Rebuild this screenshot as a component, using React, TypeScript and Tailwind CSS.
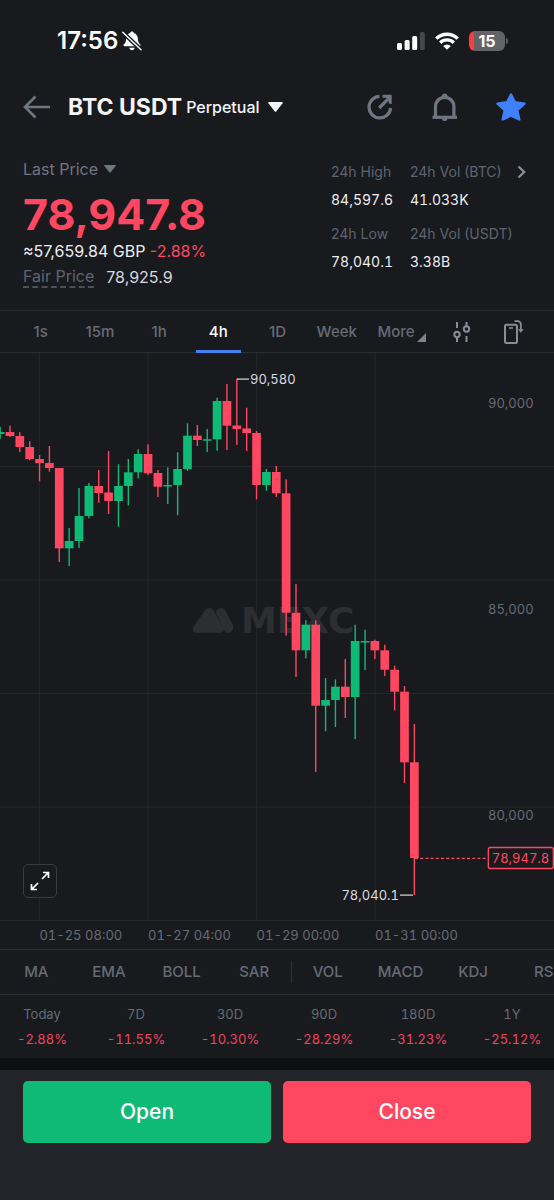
import type { ReactNode } from 'react'

// [high, body top, body bottom, low, rising] in chart units
type Candle = [number, number, number, number, boolean]

const candles: Candle[] = [
  [426.7, 432, 434, 438.7, true],
  [425.7, 432, 436, 437, false],
  [432.3, 436, 447, 452, false],
  [441.3, 447, 459, 460.3, false],
  [455, 459, 463, 481.3, false],
  [446, 463, 468, 471.7, false],
  [468, 468, 548.3, 562, false],
  [528, 541, 548.3, 566, true],
  [488, 516, 541, 548, true],
  [483, 486, 516, 518.3, true],
  [470, 486, 493, 502.7, false],
  [451, 492.5, 501, 514, false],
  [464.3, 486, 501, 526.7, true],
  [459, 472.3, 486, 505.3, true],
  [449.3, 454, 472.3, 478.3, true],
  [444.3, 454, 473.3, 475, false],
  [470, 473, 486.7, 497, false],
  [467.3, 485, 486.5, 504, true],
  [452.3, 469, 485, 515.3, true],
  [423.3, 435.7, 469, 471, true],
  [425, 435.7, 440, 446, false],
  [429, 439.3, 440.7, 452, true],
  [397.7, 401, 439.3, 450.7, true],
  [384, 401, 425.7, 450, false],
  [378.7, 425.5, 429, 445, false],
  [407.7, 428.5, 433, 451, false],
  [431, 433, 485, 499.3, false],
  [469, 472, 485, 490.7, true],
  [466, 472, 493.3, 497, false],
  [479.3, 493.3, 612.7, 635.7, false],
  [584, 612.7, 650.3, 677, false],
  [620.3, 624.7, 650.3, 658.3, true],
  [620.3, 624.7, 705.7, 772, false],
  [678, 700, 705.7, 731.3, true],
  [679.3, 686.7, 700, 727, true],
  [659, 686.7, 697, 718, false],
  [624.7, 641, 697, 739, true],
  [629.7, 641, 642.5, 670, true],
  [639.7, 641, 650.3, 659, false],
  [644.7, 650.3, 669.7, 676, false],
  [665.7, 669.7, 691.7, 710.3, false],
  [686, 691.7, 762.3, 783, false],
  [724, 762.3, 858, 895, false],
]

const CANDLE_STEP = 9.863
const CANDLE_WIDTH = 8.7

const intervals = ['1s', '15m', '1h', '4h', '1D', 'Week']
const overlays = ['MA', 'EMA', 'BOLL', 'SAR']
const oscillators = ['VOL', 'MACD', 'KDJ', 'RSI']

const dateMarks = [
  { x: 39.4, label: '01-25 08:00' },
  { x: 148, label: '01-27 04:00' },
  { x: 256.6, label: '01-29 00:00' },
  { x: 375, label: '01-31 00:00' },
]

const priceMarks = [
  { y: 403, label: '90,000' },
  { y: 609, label: '85,000' },
  { y: 815, label: '80,000' },
]

const returns = [
  { period: 'Today', change: '-2.88%' },
  { period: '7D', change: '-11.55%' },
  { period: '30D', change: '-10.30%' },
  { period: '90D', change: '-28.29%' },
  { period: '180D', change: '-31.23%' },
  { period: '1Y', change: '-25.12%' },
]

function StatusBar() {
  return (
    <div className="flex h-[82px] items-center justify-between pl-[57px] pr-[46px]">
      <div className="flex items-center gap-1">
        <span className="text-[24px] font-semibold leading-7 text-white">17:56</span>
        <svg width="20" height="20" viewBox="0 0 20 20" fill="#fff">
          <path d="M10 .5c.9 0 1.6.6 1.8 1.4 2.6.8 4 3 4.1 5.8.1 3.300.9 4.400 2.200 5.600.7.7.5 1.900-.5 1.900H2.400c-1 0-1.200-1.200-.5-1.900C3.200 12.100 4 11 4.100 7.700c.1-2.800 1.500-5 4.100-5.800C8.400 1.100 9.100.5 10 .5Z" />
          <path d="M7.300 16.800h5.400c-.2 1.400-1.300 2.400-2.700 2.400s-2.500-1-2.700-2.400Z" />
          <path d="M.6 1.200 19 18.800" stroke="#191a1e" strokeWidth="4.200" />
          <path d="M.8 1.200 19 18.800" stroke="#fff" strokeWidth="1.500" strokeLinecap="round" />
        </svg>
      </div>
      <div className="flex items-center">
        <svg width="28" height="18" viewBox="0 0 28 18" fill="#fff">
          <rect x="0" y="11" width="5" height="7" rx="1.500" />
          <rect x="7.600" y="8" width="5" height="10" rx="1.500" />
          <rect x="15.200" y="4" width="5" height="14" rx="1.500" />
          <rect x="22.800" y="0" width="5" height="18" rx="1.500" fill="#46474b" />
        </svg>
        <svg className="ml-[10px]" width="24" height="18" viewBox="0 0 24 18" fill="none" stroke="#fff" strokeWidth="3.400">
          <path d="M1.300 6.600a15.200 15.200 0 0 1 21.400 0" />
          <path d="M5.200 10.700a9.700 9.700 0 0 1 13.600 0" />
          <path d="M12 17.800 8.200 14a5.400 5.400 0 0 1 7.600 0Z" fill="#fff" stroke="none" />
        </svg>
        <div className="ml-[10px] flex h-5 w-9 items-center justify-center overflow-hidden rounded-[6px] bg-linear-to-r from-[#ff3b40] from-15% to-[#636467] to-15%">
          <span className="text-[16px] font-bold leading-5 text-white">15</span>
        </div>
        <span className="ml-px h-[6px] w-[2px] rounded-r-full bg-[#5b5c60]" />
      </div>
    </div>
  )
}

function Header() {
  return (
    <header className="flex h-[50px] items-center justify-between pl-[22px] pr-7">
      <div className="flex items-center">
        <button aria-label="Back">
          <svg width="28" height="24" viewBox="0 0 28 24" fill="none" stroke="#6f7682" strokeWidth="2.600">
            <path d="M28 12H3M13.500 1.500 3 12l10.500 10.500" />
          </svg>
        </button>
        <button className="ml-[18px] flex items-center text-[#f3f4f8]">
          <span className="text-[23px] font-bold leading-7">BTC USDT</span>
          <span className="ml-1 text-[16px] font-medium leading-7">Perpetual</span>
          <svg className="ml-2" width="15" height="10" viewBox="0 0 15 10" fill="currentColor">
            <path d="M1 0h13a.8.8 0 0 1 .6 1.200L8.200 9.400a.9.900 0 0 1-1.400 0L.4 1.200A.8.800 0 0 1 1 0Z" />
          </svg>
        </button>
      </div>
      <div className="flex items-center gap-[37px]">
        <button aria-label="Share">
          <svg width="28" height="28" viewBox="0 0 28 28" fill="none" stroke="#6f7682" strokeWidth="3.200">
            <path d="M13.500 3.300A10.800 10.800 0 1 0 24.600 15" />
            <path d="M13.200 15 22 6.200" />
            <path d="M16.500 1.800h9.200V11l-3-.4V4.800h-6.200Z" fill="#6f7682" stroke="none" />
            <path d="M18.500 3h6v6Z" fill="#6f7682" stroke="none" />
          </svg>
        </button>
        <button aria-label="Alerts">
          <svg width="28" height="28" viewBox="0 0 28 28" fill="none" stroke="#6f7682" strokeWidth="3.200">
            <path d="M4.500 24V13.500a9.200 9.200 0 0 1 18.400 0V24" />
            <path d="M1.500 24.300H26" />
            <path d="M10.700 3.600c.2-4.100 5.800-4.100 6 0ZM10.900 25.500h5.500c-.4 3.500-5.100 3.500-5.500 0Z" fill="#6f7682" stroke="none" />
          </svg>
        </button>
        <button aria-label="Favourite">
          <svg width="30" height="28" viewBox="0 0 30 28" fill="#3f80fb" stroke="#3f80fb" strokeWidth="2.400" strokeLinejoin="round">
            <path d="m15 1.500 3.900 7.800 9.600 1.300-7.200 6.600 2 9.300L15 22.600l-8.300 3.900 2-9.300-7.200-6.600 9.600-1.300Z" />
          </svg>
        </button>
      </div>
    </header>
  )
}

function Metric({ label, value }: { label: string; value: string }) {
  return (
    <div className="leading-7">
      <dt className="text-[14px] text-[#5f6570]">{label}</dt>
      <dd className="text-[14px] tabular-nums text-[#eceef2]">{value}</dd>
    </div>
  )
}

function PriceSummary() {
  return (
    <section className="flex justify-between px-[23px] pb-5 pt-[26px]">
      <div>
        <button className="flex items-center gap-[6px] text-[16px] leading-[22px] text-[#6f7682]">
          Last Price
          <svg width="12" height="8" viewBox="0 0 12 8" fill="currentColor">
            <path d="M.8 0h10.400a.6.600 0 0 1 .5 1L6.500 7.400a.6.600 0 0 1-1 0L.3 1A.6.600 0 0 1 .8 0Z" />
          </svg>
        </button>
        <p className="mt-3 text-[43px] font-bold leading-[44px] text-[#ff4761]">78,947.8</p>
        <p className="mt-[2px] text-[16px] leading-[26px] text-[#eceef2]">
          ≈57,659.84 GBP <span className="text-[#ff4761]">-2.88%</span>
        </p>
        <p className="flex items-center text-[16px] leading-[26px]">
          <span className="border-b-2 border-dashed border-[#4c5059] leading-5 text-[#5f6570]">Fair Price</span>
          <span className="ml-3 text-[#d5d7dc]">78,925.9</span>
        </p>
      </div>
      <div className="flex items-start">
        <dl className="grid grid-cols-[79px_103px] gap-y-[6px] whitespace-nowrap">
          <Metric label="24h High" value="84,597.6" />
          <Metric label="24h Vol (BTC)" value="41.033K" />
          <Metric label="24h Low" value="78,040.1" />
          <Metric label="24h Vol (USDT)" value="3.38B" />
        </dl>
        <button className="flex h-7 items-center pl-1 pr-[5px]" aria-label="More market data">
          <svg width="9" height="14" viewBox="0 0 9 14" fill="none" stroke="#8a909b" strokeWidth="2.200">
            <path d="m1.500 1.500 5.700 5.500-5.700 5.500" />
          </svg>
        </button>
      </div>
    </section>
  )
}

function IntervalTab({ active, children }: { active?: boolean; children: ReactNode }) {
  return (
    <button
      className={`relative flex h-full items-center justify-center pt-[2px] text-[15px] font-medium ${active ? 'text-white' : 'text-[#666b76]'}`}
    >
      {children}
      {active && <span className="absolute -bottom-px h-[3px] w-[45px] bg-[#4580f0]" />}
    </button>
  )
}

function IntervalBar() {
  return (
    <nav className="grid h-[43px] grid-cols-[59fr_59fr_59fr_59fr_59fr_59fr_59fr_72fr_32fr] border-y border-[#2b2d33] pl-[11px] pr-[24px]">
      {intervals.map(interval => (
        <IntervalTab key={interval} active={interval === '4h'}>{interval}</IntervalTab>
      ))}
      <IntervalTab>
        More
        <svg className="absolute bottom-[10px] right-0 text-[#7d828c]" width="9" height="9" viewBox="0 0 9 9" fill="currentColor">
          <path d="M9 0v9H0Z" />
        </svg>
      </IntervalTab>
      <button className="flex items-center justify-center" aria-label="Indicators">
        <svg width="18" height="22" viewBox="0 0 18 22" fill="none" stroke="#8a8d96" strokeWidth="2">
          <circle cx="4" cy="13.500" r="2.700" />
          <path d="M4 1v6M4 16.500V21" />
          <circle cx="13.500" cy="8" r="2.700" />
          <path d="M13.500 1v4M13.500 15v6" />
        </svg>
      </button>
      <button className="flex items-center justify-center" aria-label="Rotate chart">
        <svg width="20" height="24" viewBox="0 0 20 24" fill="none" stroke="#8a8d96" strokeWidth="2">
          <rect x="1" y="4.700" width="12" height="18.300" rx="1.500" />
          <path d="M5 8h4" strokeWidth="1.600" />
          <path d="M10.500 1.200h3.300a3 3 0 0 1 3 3V10" strokeWidth="1.800" />
          <path d="M14 9.300h5.600l-2.800 3.500Z" fill="#8a8d96" stroke="none" />
        </svg>
      </button>
    </nav>
  )
}

function Chart() {
  return (
    <div className="relative">
      <svg className="block h-auto w-full tabular-nums" viewBox="0 353 554 596" fontFamily="Inter, sans-serif" fontSize="13">
        <g stroke="#25272b" strokeWidth="1">
          {dateMarks.map(mark => (
            <path key={mark.label} d={`M${mark.x} 353V920`} />
          ))}
          <path d="M0 466.500H554M0 580H554M0 693.500H554M0 807H554M0 920.500H554" />
        </g>

        {/* Watermark */}
        <g fill="#2d2e32">
          <path d="M205 610.500c2-3.200 6.500-3.200 8.500 0l9.800 16.500c2 3.300-.2 5.800-3.600 5.800h-22.500c-4.200 0-5.600-3.200-3.400-6.600Z" />
          <path d="M215.500 612c2.200-5 7.400-5.400 10-1.200l7.200 13.700c2.500 5-2.600 10.500-7.400 7.700Z" />
          <text x="241" y="633" fontFamily="DejaVu Sans, sans-serif" fontWeight="700" fontSize="36">MEXC</text>
        </g>

        {candles.map(([high, top, bottom, low, rising], i) => {
          const x = 0.1 + i * CANDLE_STEP
          return (
            <g key={i} fill={rising ? '#0fba77' : '#ff4761'}>
              <rect x={x - 0.7} y={high} width="1.400" height={low - high} />
              <rect x={x - CANDLE_WIDTH / 2} y={top} width={CANDLE_WIDTH} height={bottom - top} />
            </g>
          )
        })}

        {/* Extremes */}
        <g fill="#d9dbe0" stroke="none">
          <rect x="237" y="378.500" width="12" height="1.200" />
          <text x="250" y="384">90,580</text>
          <rect x="400" y="894.500" width="13" height="1.200" />
          <text x="399" y="900" textAnchor="end">78,040.1</text>
        </g>

        <g fill="#666b76">
          {priceMarks.map(mark => (
            <text key={mark.label} x="488" y={mark.y + 5}>{mark.label}</text>
          ))}
          {dateMarks.map(mark => (
            <text key={mark.label} x={mark.x} y="940">{mark.label}</text>
          ))}
        </g>

        {/* Current price */}
        <path d="M415 858.300H486" stroke="#ff4761" strokeWidth="1.200" strokeDasharray="3 2.200" />
        <rect x="488.300" y="847.500" width="65" height="21" rx="2" fill="#191a1e" stroke="#ff4761" strokeWidth="1.300" />
        <text x="520.500" y="863" textAnchor="middle" fill="#ff4761">78,947.8</text>
      </svg>
      <button
        className="absolute bottom-[51px] left-[23px] flex size-[34px] items-center justify-center rounded-[5px] border border-[#3a3b40] bg-[#191a1e]"
        aria-label="Full screen"
      >
        <svg width="20" height="20" viewBox="0 0 20 20" fill="none" stroke="#fff" strokeWidth="1.700">
          <path d="m12 8 6.300-6.300M13 1.500h5.500V7M8 12l-6.300 6.300M1.500 13v5.500H7" />
        </svg>
      </button>
    </div>
  )
}

function IndicatorBar() {
  return (
    <div className="overflow-hidden border-y border-[#2b2d33]">
      <div className="-mr-7 flex h-11 items-center text-[15px] font-medium text-[#666b76]">
        {overlays.map(name => (
          <button key={name} className="flex-1">{name}</button>
        ))}
        <span className="h-[22px] w-px bg-[#2f3137]" />
        {oscillators.map(name => (
          <button key={name} className="flex-1">{name}</button>
        ))}
      </div>
    </div>
  )
}

function Returns() {
  return (
    <div className="-mx-[5px] h-[63px] pt-[6px]">
      <table className="w-full table-fixed text-center text-[13px] tabular-nums">
        <thead>
          <tr>
            {returns.map(item => (
              <th key={item.period} className="p-0 text-center font-normal leading-[26px] text-[#666b76]">{item.period}</th>
            ))}
          </tr>
        </thead>
        <tbody>
          <tr>
            {returns.map(item => (
              <td key={item.period} className="p-0 leading-6 text-[#ee4560]">{item.change}</td>
            ))}
          </tr>
        </tbody>
      </table>
    </div>
  )
}

export default function App() {
  return (
    <div className="flex min-h-screen flex-col overflow-x-hidden bg-[#191a1e] font-['Inter',sans-serif]">
      <StatusBar />
      <Header />
      <PriceSummary />
      <IntervalBar />
      <Chart />
      <IndicatorBar />
      <Returns />
      <footer className="grid flex-1 grid-cols-2 items-start gap-3 border-t-12 border-[#0e0f11] bg-[#232429] px-[23px] pb-[57px] pt-[11px]">
        <button className="h-[62px] rounded-[5px] bg-[#0fba77] text-[21px] font-medium text-white">Open</button>
        <button className="h-[62px] rounded-[5px] bg-[#ff4761] text-[21px] font-medium text-white">Close</button>
      </footer>
    </div>
  )
}
